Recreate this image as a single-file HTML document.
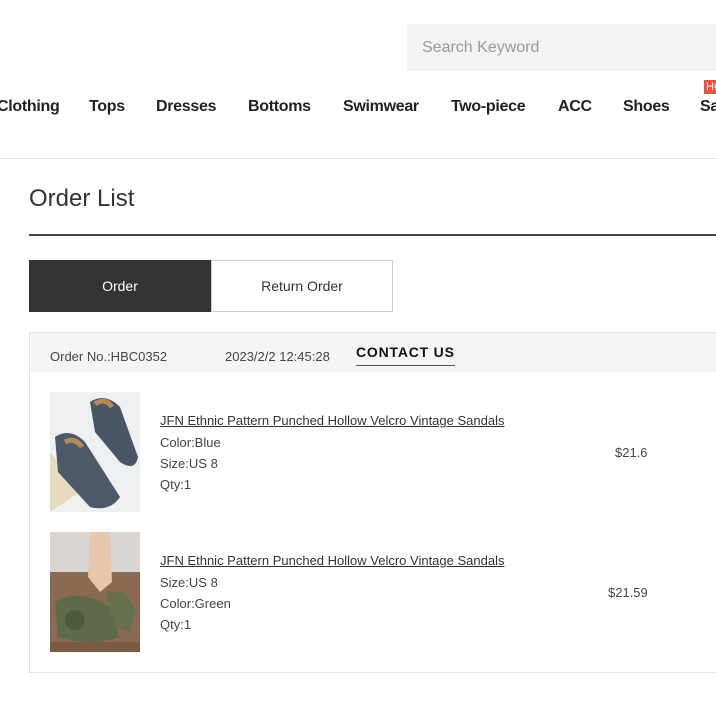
<!DOCTYPE html>
<html><head><style>
*{margin:0;padding:0;box-sizing:border-box}
body{width:716px;height:716px;overflow:hidden;background:#fff;font-family:"Liberation Sans",Arial,sans-serif;color:#333;position:relative}
.a{position:absolute;white-space:nowrap}
.nav{font-weight:bold;font-size:16px;color:#222;top:98px;letter-spacing:-0.3px}
.s{font-size:13px;color:#444}
</style></head><body>
<div class="a" style="left:407px;top:24px;width:320px;height:47px;background:#f3f3f3"></div>
<div class="a" style="left:422px;top:39px;font-size:16px;color:#999">Search Keyword</div>
<div class="a nav" style="left:-3px">Clothing</div>
<div class="a nav" style="left:89px">Tops</div>
<div class="a nav" style="left:156px">Dresses</div>
<div class="a nav" style="left:248px">Bottoms</div>
<div class="a nav" style="left:343px">Swimwear</div>
<div class="a nav" style="left:451px">Two-piece</div>
<div class="a nav" style="left:558px">ACC</div>
<div class="a nav" style="left:623px">Shoes</div>
<div class="a nav" style="left:700px">Sale</div>
<div class="a" style="left:704px;top:80px;width:16px;height:14px;background:#e8533f;color:#fff;font-size:11px;line-height:14px;padding-left:2px">HOT</div>
<div class="a" style="left:0;top:158px;width:716px;height:1px;background:#e6e6e6"></div>
<div class="a" style="left:29px;top:185px;font-size:24px;color:#333">Order List</div>
<div class="a" style="left:29px;top:234px;width:700px;height:2px;background:#444"></div>
<div class="a" style="left:29px;top:260px;width:182px;height:52px;background:#333;color:#fff;font-size:14px;line-height:52px;text-align:center">Order</div>
<div class="a" style="left:211px;top:260px;width:182px;height:52px;border:1px solid #ccc;font-size:14px;line-height:50px;text-align:center;color:#333">Return Order</div>
<div class="a" style="left:29px;top:332px;width:700px;height:341px;border:1px solid #e3e3e3"></div>
<div class="a" style="left:30px;top:333px;width:700px;height:39px;background:#f5f5f5"></div>
<div class="a s" style="left:50px;top:349px">Order No.:HBC0352</div>
<div class="a s" style="left:225px;top:349px">2023/2/2 12:45:28</div>
<div class="a" style="left:356px;top:344px;font-size:14px;font-weight:bold;letter-spacing:0.8px;color:#111;border-bottom:1px solid #555;padding-bottom:5px;width:99px">CONTACT US</div>
<svg class="a" style="left:50px;top:392px" width="90" height="120" viewBox="0 0 90 120"><rect width="90" height="120" fill="#eef0f2"/><path d="M0 60 L30 100 L0 120Z" fill="#e8dcc0"/><path d="M40 10 Q55 0 70 15 L88 65 Q85 80 70 70 L45 40Z" fill="#4a5565"/><path d="M5 45 Q20 35 35 50 L70 105 Q60 120 40 115 L8 80Z" fill="#4d5868"/><path d="M15 50 Q25 45 32 55" stroke="#b48a5a" stroke-width="5" fill="none"/><path d="M45 12 Q55 5 62 15" stroke="#b48a5a" stroke-width="5" fill="none"/></svg>
<div class="a s" style="left:160px;top:413px;text-decoration:underline;color:#333">JFN Ethnic Pattern Punched Hollow Velcro Vintage Sandals</div>
<div class="a s" style="left:160px;top:435px">Color:Blue</div>
<div class="a s" style="left:160px;top:456px">Size:US 8</div>
<div class="a s" style="left:160px;top:477px">Qty:1</div>
<div class="a s" style="left:615px;top:445px">$21.6</div>
<svg class="a" style="left:50px;top:532px" width="90" height="120" viewBox="0 0 90 120"><rect width="90" height="120" fill="#8a6a52"/><rect width="90" height="40" fill="#d9d6d2"/><path d="M40 0 L60 0 L62 50 L50 60 L38 45Z" fill="#e6c7ae"/><path d="M5 70 Q30 55 60 75 L70 105 Q40 115 8 105Z" fill="#5e6a4a"/><circle cx="25" cy="88" r="10" fill="#4e5a3c"/><path d="M55 60 Q80 55 85 80 L80 100 L65 95Z" fill="#66704f"/><rect x="0" y="110" width="90" height="10" fill="#7a5a40"/></svg>
<div class="a s" style="left:160px;top:553px;text-decoration:underline;color:#333">JFN Ethnic Pattern Punched Hollow Velcro Vintage Sandals</div>
<div class="a s" style="left:160px;top:575px">Size:US 8</div>
<div class="a s" style="left:160px;top:596px">Color:Green</div>
<div class="a s" style="left:160px;top:617px">Qty:1</div>
<div class="a s" style="left:608px;top:585px">$21.59</div>
</body></html>
